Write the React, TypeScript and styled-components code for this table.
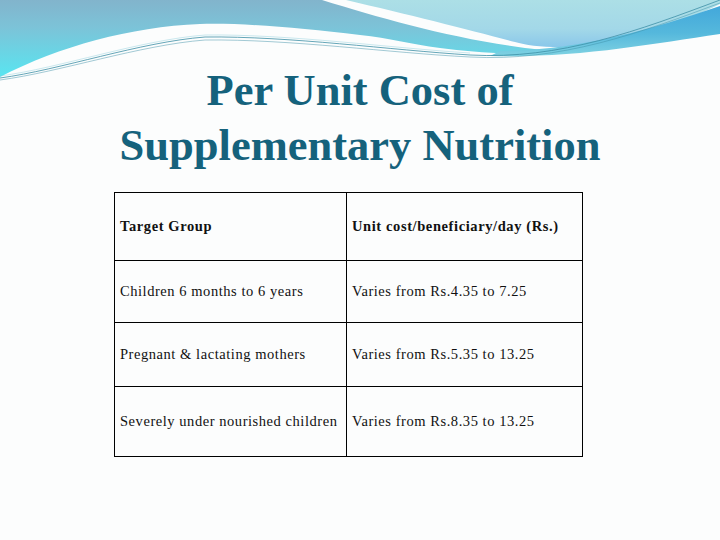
import React from "react";
import styled, { createGlobalStyle } from "styled-components";

const Global = createGlobalStyle`
  html, body { margin: 0; padding: 0; background: #fcfdfd; }
  body { width: 720px; height: 540px; overflow: hidden; font-family: "Liberation Serif", "Times New Roman", serif; }
`;

const Slide = styled.div`
  width: 720px;
  height: 540px;
  background: #fcfdfd;
  display: flex;
  flex-direction: column;
`;

const Banner = styled.svg`
  display: block;
  width: 720px;
  height: 90px;
  margin-bottom: -27px;
  flex: none;
`;

const Title = styled.h1`
  margin: 0;
  font-family: "Liberation Serif", "Times New Roman", serif;
  font-weight: bold;
  font-size: 44.5px;
  line-height: 55px;
  color: #15627c;
  text-align: center;
`;

const Table = styled.table`
  margin: 19px 0 0 114px;
  border-collapse: collapse;
  table-layout: fixed;
  width: 468px;
  font-family: "Liberation Serif", "Times New Roman", serif;
  font-size: 14.5px;
  color: #111;
`;

const Row = styled.tr<{ $h: number }>`
  height: ${(p) => p.$h}px;
`;

const Cell = styled.td<{ $w: number; $bold?: boolean }>`
  box-sizing: border-box;
  width: ${(p) => p.$w}px;
  border: 1px solid #000;
  padding: 0 5px;
  vertical-align: middle;
  font-weight: ${(p) => (p.$bold ? "bold" : "normal")};
  letter-spacing: ${(p) => (p.$bold ? "0.6px" : "0.55px")};
  white-space: nowrap;
`;

const rows = [
  { h: 68, a: "Target Group", b: "Unit cost/beneficiary/day (Rs.)", bold: true },
  { h: 62, a: "Children 6 months to 6 years", b: "Varies from Rs.4.35 to 7.25" },
  { h: 64, a: "Pregnant & lactating mothers", b: "Varies from Rs.5.35 to 13.25" },
  { h: 70, a: "Severely under nourished children", b: "Varies from Rs.8.35 to 13.25" },
];

function Wave() {
  return (
    <Banner viewBox="0 0 720 90" preserveAspectRatio="none">
      <defs>
        <linearGradient id="g1" gradientUnits="userSpaceOnUse" x1="0" y1="0" x2="0" y2="78">
          <stop offset="0" stopColor="#82b4cc" />
          <stop offset="0.35" stopColor="#7cc3d8" />
          <stop offset="1" stopColor="#58e6f1" />
        </linearGradient>
        <linearGradient id="g2" gradientUnits="userSpaceOnUse" x1="0" y1="0" x2="0" y2="48">
          <stop offset="0" stopColor="#acdfe6" />
          <stop offset="0.6" stopColor="#a3d8e8" />
          <stop offset="1" stopColor="#88c6ea" />
        </linearGradient>
        <linearGradient id="g3" gradientUnits="userSpaceOnUse" x1="0" y1="10" x2="0" y2="56">
          <stop offset="0" stopColor="#45aadb" />
          <stop offset="0.5" stopColor="#55b8dc" />
          <stop offset="1" stopColor="#7fd2e2" />
        </linearGradient>
      </defs>
      <path
        d="M0,0 H322 C380,18 450,38 525,48 C560,52 565,54 540,54 C500,54 470,52 440,48 C410,44 390,38 360,35 C300,28 250,23 200,24 C130,27 60,46 0,77 Z"
        fill="url(#g1)"
      />
      <path
        d="M346,0 H720 V4 C680,24 620,46 560,47 C540,47 525,45 515,42 C470,30 410,15 346,0 Z"
        fill="url(#g2)"
      />
      <path
        d="M500,51 C580,50 650,30 720,6 V34 C650,44 580,58 490,56 Z"
        fill="url(#g3)"
      />
      <g fill="none" stroke="#3e8fa6" strokeWidth="0.8">
        <path d="M0,78 C60,70 140,42 205,37 C290,36 390,50 470,55 C560,60 640,30 720,0" />
        <path d="M0,80 C60,72 140,45 205,40 C290,39 390,53 470,57 C560,62 640,33 720,3" opacity="0.6" />
        <path d="M0,76 C60,68 140,40 205,35 C290,34 390,48 470,53" opacity="0.5" stroke="#7fc8d8" />
      </g>
    </Banner>
  );
}

export default function App() {
  return (
    <>
      <Global />
      <Slide>
        <Wave />
        <Title>
          Per Unit Cost of
          <br />
          Supplementary Nutrition
        </Title>
        <Table>
          <tbody>
            {rows.map((r, i) => (
              <Row key={i} $h={r.h}>
                <Cell $w={232} $bold={r.bold}>{r.a}</Cell>
                <Cell $w={236} $bold={r.bold}>{r.b}</Cell>
              </Row>
            ))}
          </tbody>
        </Table>
      </Slide>
    </>
  );
}
